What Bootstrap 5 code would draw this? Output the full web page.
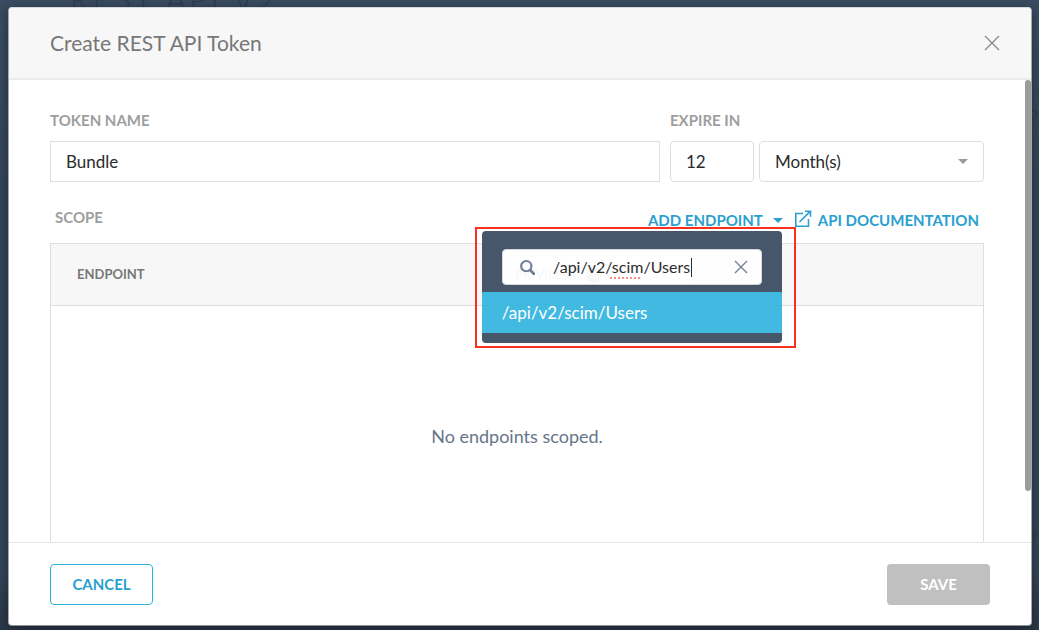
<!DOCTYPE html>
<html lang="en">
<head>
<meta charset="utf-8">
<meta name="viewport" content="width=device-width, initial-scale=1">
<title>Create REST API Token</title>
<link href="https://cdn.jsdelivr.net/npm/bootstrap@5.3.0/dist/css/bootstrap.min.css" rel="stylesheet">
<style>
  body { font-family: Lato, "Liberation Sans", sans-serif; font-size: 16px; color: #333; background: linear-gradient(#3a4c61, #34465a 30%, #34465a 90%, #2a3746); }
  .page-behind { position: absolute; inset: 0; overflow: hidden; color: #2f3f50; z-index: 0; }
  .behind-title { position: absolute; left: 70px; top: -17px; font-size: 32px; line-height: 32px; font-weight: 300; letter-spacing: 3px; }
  .behind-text { position: absolute; right: -12px; top: 82px; line-height: 20px; text-align: right; }
  .behind-text-low { top: 524px; right: -8px; }
  .dialog-stage { position: relative; z-index: 1; padding: 7px 7px 4px 8px; }
  .token-dialog { border: 1px solid #a5a9ad; border-color: #d5d8da #a5a9ad #8d9298; border-radius: 4px; box-shadow: 0 2px 12px rgba(0,0,0,.4); }
  .token-header { height: 72px; padding: 0 31px 0 41px; background: #f7f7f7; border-bottom: 2px solid #ebebeb; }
  .token-header h1 { font-size: 21px; line-height: 24px; color: #777; }
  .icon-button { border: 0; background: none; padding: 0; line-height: 0; }
  .token-body { position: relative; padding: 30px 47px 0 41px; }
  .scroll-thumb { position: absolute; right: 0; top: 0; width: 6px; height: 89%; border-radius: 3px; background: #9c9c9c; }
  .field-label { font-size: 15px; line-height: 20px; font-weight: 700; color: #9e9e9e; display: block; margin-bottom: 11px; }
  .field { height: 41px; border: 1px solid #dedede; padding: 0 15px; font-size: 17px; color: #2b2b2b; border-radius: 4px; background-color: #fff; box-shadow: none; }
  .field-name { border-radius: 0; }
  .name-group { margin-right: 10px; }
  .expiry-group { gap: 5px; }
  .field-count { width: 84px; }
  .field-unit { width: 225px; background-image: url("data:image/svg+xml,%3Csvg xmlns='http://www.w3.org/2000/svg' viewBox='0 0 10 5'%3E%3Cpath fill='%239a9a9a' d='M0 0h10L5 5z'/%3E%3C/svg%3E"); background-size: 10px 5px; background-position: right 15px center; }
  .scope-row { margin-top: 25px; height: 36px; padding: 0 5px; }
  .scope-row .field-label { margin: 0; }
  .scope-actions { padding-top: 3px; gap: 11px; }
  .text-action { border: 0; background: none; padding: 0; font-size: 15px; line-height: 20px; font-weight: 700; color: #2a9fd0; text-decoration: none; }
  .external-icon { margin-right: 6px; }
  .action-caret { border: 5px solid transparent; border-top-color: #2a9fd0; border-bottom: 0; margin-left: 10px; }
  .scope-panel { border: 1px solid #dedede; }
  .scope-panel th { height: 61px; padding: 0 26px; font-size: 13px; font-weight: 700; color: #777; background: #f7f7f7; vertical-align: middle; }
  .scope-panel th:first-child { width: 47%; }
  .scope-panel tr { border-bottom: 1px solid #dedede; }
  .info-dot { width: 16px; height: 16px; border-radius: 50%; background: #777; color: #fff; margin-left: 7px; font-size: 11px; line-height: 16px; text-align: center; display: inline-block; }
  .scope-panel .empty-cell { height: 262px; font-size: 18px; color: #66758a; text-align: center; padding: 0; background: #fff; }
  .highlight-frame { position: absolute; top: 17px; right: -13px; width: 321px; padding: 2px 12px 3px 5px; border: 2px solid #f7301f; z-index: 5; }
  .endpoint-menu { background: #3d4e64; border-radius: 4px; opacity: .95; padding: 18px 0 10px; }
  .search-box { height: 36px; margin: 0 20px 7px; padding: 0 13px 0 17px; background: #fff; border: 1px solid #d3d7dc; border-radius: 4px; }
  .search-edit { position: relative; margin-left: 18px; }
  .search-edit input { width: 100%; border: 0; padding: 0; outline: 0; background: none; font-size: 16px; line-height: 24px; color: #222; }
  .text-cursor { position: absolute; left: 138px; top: 3px; width: 1px; height: 19px; background: #222; }
  .spell-dots { position: absolute; left: 57px; top: 22px; width: 32px; height: 2px; background: repeating-linear-gradient(90deg, #f28b84 0 2px, transparent 2px 4px); }
  .endpoint-option { display: block; width: 100%; height: 41px; border: 0; padding: 0 20px; background: #38b6df; color: #fff; text-align: left; font-size: 17px; }
  .token-footer { height: 83px; padding: 0 41px; border-top: 1px solid #e6e6e6; }
  .footer-button { width: 103px; height: 41px; border-radius: 4px; font-size: 15px; font-weight: 700; padding: 0; }
  .cancel-button { border: 1px solid #2cb2dc; color: #2a9fd0; }
  .save-button, .save-button:disabled { background: #c0c0c0; color: #fff; border: 0; opacity: 1; }
</style>
</head>
<body>
<div class="page-behind" aria-hidden="true">
  <div class="behind-title">REST API V2</div>
  <div class="behind-text">to<br>com</div>
  <div class="behind-text behind-text-low">re</div>
</div>
<div class="dialog-stage vh-100">
  <div class="token-dialog bg-white h-100 d-flex flex-column overflow-hidden" role="dialog" aria-labelledby="dialog-title">
    <header class="token-header d-flex align-items-center justify-content-between flex-shrink-0">
      <h1 id="dialog-title" class="m-0 fw-normal">Create REST API Token</h1>
      <button class="icon-button" type="button" aria-label="Close">
        <svg width="16" height="16" viewBox="0 0 16 16" fill="none" stroke="#8c8c8c" stroke-width="1.4"><path d="M1 1l14 14M15 1L1 15"/></svg>
      </button>
    </header>
    <main class="token-body flex-grow-1 overflow-hidden">
      <div class="scroll-thumb"></div>
      <div class="d-flex">
        <div class="name-group flex-grow-1">
          <label class="field-label" for="token-name">TOKEN NAME</label>
          <input class="form-control field field-name" id="token-name" type="text" value="Bundle">
        </div>
        <div>
          <label class="field-label" for="expire-count">EXPIRE IN</label>
          <div class="expiry-group d-flex">
            <input class="form-control field field-count" id="expire-count" type="text" value="12">
            <select class="form-select field field-unit" aria-label="Expiry unit"><option>Month(s)</option></select>
          </div>
        </div>
      </div>
      <div class="scope-row d-flex justify-content-between align-items-start">
        <span class="field-label">SCOPE</span>
        <div class="scope-actions d-flex">
          <div class="position-relative">
            <button class="text-action d-flex align-items-center" type="button" aria-expanded="true">ADD ENDPOINT<span class="action-caret"></span></button>
            <div class="highlight-frame">
              <div class="endpoint-menu">
                <div class="search-box d-flex align-items-center">
                  <svg width="17" height="17" viewBox="0 0 17 17" fill="none" stroke="#6a7b92"><circle cx="7" cy="7" r="5.7" stroke-width="2.4"/><path d="M11.2 11.2l4.2 4.2" stroke-width="3" stroke-linecap="round"/></svg>
                  <div class="search-edit flex-grow-1">
                    <input type="text" value="/api/v2/scim/Users" aria-label="Search endpoints" spellcheck="false">
                    <span class="spell-dots"></span><span class="text-cursor"></span>
                  </div>
                  <button class="icon-button" type="button" aria-label="Clear search">
                    <svg width="14" height="14" viewBox="0 0 14 14" fill="none" stroke="#6a7b92" stroke-width="1.4"><path d="M1 1l12 12M13 1L1 13"/></svg>
                  </button>
                </div>
                <button class="endpoint-option" type="button">/api/v2/scim/Users</button>
              </div>
            </div>
          </div>
          <a class="text-action d-flex" href="#">
            <svg class="external-icon" width="18" height="18" viewBox="0 0 18 18" fill="none" stroke="#2a9fd0" stroke-width="1.6"><path d="M9 3.5H1.8v12.7h12.7V9M5.5 12L16 1.6M11 1.3h5.5v5.5"/></svg>
            API DOCUMENTATION
          </a>
        </div>
      </div>
      <div class="scope-panel">
        <table class="w-100">
          <thead><tr><th scope="col">ENDPOINT</th><th scope="col">PRIVILEGE<span class="info-dot">i</span></th></tr></thead>
          <tbody><tr><td class="empty-cell" colspan="2">No endpoints scoped.</td></tr></tbody>
        </table>
      </div>
    </main>
    <footer class="token-footer d-flex align-items-center justify-content-between flex-shrink-0">
      <button class="btn footer-button cancel-button" type="button">CANCEL</button>
      <button class="btn footer-button save-button" type="button" disabled>SAVE</button>
    </footer>
  </div>
</div>
<script src="https://cdn.jsdelivr.net/npm/bootstrap@5.3.0/dist/js/bootstrap.bundle.min.js"></script>
</body>
</html>
